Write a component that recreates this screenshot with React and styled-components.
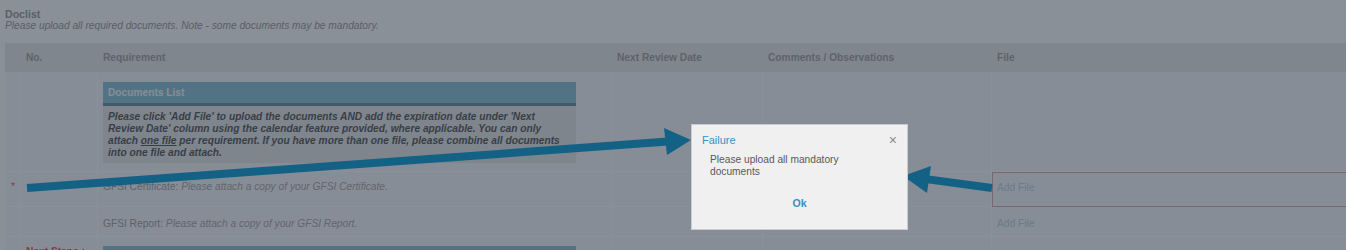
import React from "react";
import styled, { createGlobalStyle } from "styled-components";

const GlobalStyle = createGlobalStyle`
  html, body {
    margin: 0;
    padding: 0;
    background: #ffffff;
    font-family: "Liberation Sans", Arial, sans-serif;
    overflow: hidden;
  }
`;

const Page = styled.div`
  position: relative;
  width: 1346px;
  height: 250px;
  overflow: hidden;
  background: #fdfdfd;
  font-size: 10.2px;
`;

const Content = styled.div`
  padding: 8px 0 0 5px;
`;

const Title = styled.div`
  font-weight: 700;
  font-size: 10.6px;
  color: #9a9a9a;
  line-height: 12px;
`;

const Subtitle = styled.div`
  font-style: italic;
  color: #9a9a9a;
  line-height: 12px;
`;

const Table = styled.table`
  margin-top: 11px;
  width: 1380px;
  border-collapse: separate;
  border-spacing: 0;
  table-layout: fixed;
  font-size: 10.2px;
`;

const HeadCell = styled.th`
  background: #e9e9e9;
  color: #a2a2a2;
  font-weight: 700;
  text-align: left;
  height: 29px;
  padding: 0 5px;
`;

const Cell = styled.td`
  background: #f7f7f8;
  border-right: 1px solid #ffffff;
  border-bottom: 1px solid #ffffff;
  vertical-align: top;
  padding: ${(p) => (p.$pad ? p.$pad : "0 5px")};
  height: ${(p) => p.$h || "auto"};
  color: #b4b4b4;
  box-sizing: border-box;
  line-height: 12px;
`;

const FileCell = styled(Cell)`
  border: ${(p) => (p.$invalid ? "1px solid #dca6ad" : "none")};
  border-bottom: 1px solid ${(p) => (p.$invalid ? "#dca6ad" : "#ffffff")};
`;

const Asterisk = styled.span`
  color: #e35a66;
  padding-left: 6px;
`;

const Label = styled.span`
  color: #a0a0a0;
`;

const Hint = styled.span`
  font-style: italic;
  color: #a8a8a8;
`;

const InfoBox = styled.div`
  width: 473px;
`;

const InfoHeader = styled.div`
  background: #8cc2d5;
  color: #f4f8fa;
  font-weight: 700;
  height: 21px;
  line-height: 21px;
  padding: 0 5px;
  border-bottom: 3px solid #6f8fa0;
`;

const InfoBody = styled.div`
  background: #e6e6e6;
  color: #595959;
  font-weight: 700;
  font-style: italic;
  line-height: 12px;
  padding: 5px 5px 0;
  height: 57px;
  box-sizing: border-box;

  u {
    text-decoration: underline;
  }
`;

const NextSteps = styled.span`
  color: #e0535e;
  font-weight: 700;
  white-space: nowrap;
`;

const AddFile = styled.span`
  color: #b4d2e4;
`;

const Overlay = styled.div`
  position: absolute;
  inset: 0;
  background: rgba(23, 35, 51, 0.5);
`;

const Arrows = styled.svg`
  position: absolute;
  left: 0;
  top: 0;
  pointer-events: none;
`;

const Modal = styled.div`
  position: absolute;
  left: 691px;
  top: 124px;
  width: 217px;
  height: 106px;
  background: #f0f0f0;
  border: 1px solid #c9cdd2;
  box-sizing: border-box;
  padding: 8px 10px 0 10px;
`;

const ModalHead = styled.div`
  display: flex;
  justify-content: space-between;
  align-items: center;
  height: 14px;
`;

const ModalTitle = styled.span`
  color: #3a8fc0;
  font-size: 11px;
`;

const CloseBtn = styled.span`
  color: #8a8a8a;
  font-size: 14px;
  line-height: 14px;
`;

const ModalText = styled.div`
  color: #595959;
  font-size: 10.2px;
  line-height: 12px;
  margin: 7px 0 0 8px;
  width: 140px;
`;

const ModalFooter = styled.div`
  text-align: center;
  margin-top: 19px;
  line-height: 12px;
`;

const OkButton = styled.span`
  color: #3a8fc0;
  font-weight: 700;
  font-size: 10.6px;
`;

export default function App() {
  return (
    <>
      <GlobalStyle />
      <Page>
        <Content>
          <Title>Doclist</Title>
          <Subtitle>
            Please upload all required documents. Note - some documents may be
            mandatory.
          </Subtitle>
          <Table>
            <colgroup>
              <col style={{ width: 16 }} />
              <col style={{ width: 77 }} />
              <col style={{ width: 514 }} />
              <col style={{ width: 151 }} />
              <col style={{ width: 229 }} />
              <col />
            </colgroup>
            <thead>
              <tr>
                <HeadCell />
                <HeadCell>No.</HeadCell>
                <HeadCell>Requirement</HeadCell>
                <HeadCell>Next Review Date</HeadCell>
                <HeadCell>Comments / Observations</HeadCell>
                <HeadCell>File</HeadCell>
              </tr>
            </thead>
            <tbody>
              <tr>
                <Cell />
                <Cell />
                <Cell $pad="10px 5px 8px 5px">
                  <InfoBox>
                    <InfoHeader>Documents List</InfoHeader>
                    <InfoBody>
                      Please click 'Add File' to upload the documents AND add the
                      expiration date under 'Next Review Date' column using the
                      calendar feature provided, where applicable. You can only
                      attach <u>one file</u> per requirement. If you have more
                      than one file, please combine all documents into one file
                      and attach.
                    </InfoBody>
                  </InfoBox>
                </Cell>
                <Cell />
                <Cell />
                <FileCell />
              </tr>
              <tr>
                <Cell $pad="9px 0 0 0" $h="35px">
                  <Asterisk>*</Asterisk>
                </Cell>
                <Cell />
                <Cell $pad="9px 5px 0 5px">
                  <Label>GFSI Certificate:</Label>{" "}
                  <Hint>Please attach a copy of your GFSI Certificate.</Hint>
                </Cell>
                <Cell />
                <Cell />
                <FileCell $invalid $pad="9px 4px 0 4px">
                  <AddFile>Add File</AddFile>
                </FileCell>
              </tr>
              <tr>
                <Cell $h="30px" />
                <Cell />
                <Cell $pad="11px 5px 0 5px">
                  <Label>GFSI Report:</Label>{" "}
                  <Hint>Please attach a copy of your GFSI Report.</Hint>
                </Cell>
                <Cell />
                <Cell />
                <FileCell $pad="11px 5px 0 5px">
                  <AddFile>Add File</AddFile>
                </FileCell>
              </tr>
              <tr>
                <Cell />
                <Cell $pad="9px 5px 0 5px">
                  <NextSteps>Next Steps :</NextSteps>
                </Cell>
                <Cell $pad="9px 5px 0 5px">
                  <InfoBox>
                    <InfoHeader>Next Steps</InfoHeader>
                  </InfoBox>
                </Cell>
                <Cell />
                <Cell />
                <FileCell />
              </tr>
            </tbody>
          </Table>
        </Content>
        <Overlay />
        <Arrows width="1346" height="250" viewBox="0 0 1346 250">
          <line
            x1="27"
            y1="188"
            x2="668"
            y2="141.6"
            stroke="#136286"
            strokeWidth="8"
          />
          <polygon points="691,140 664,128 667,155" fill="#136286" />
          <line
            x1="992"
            y1="188"
            x2="928"
            y2="179.4"
            stroke="#136286"
            strokeWidth="8"
          />
          <polygon points="903,176 931,166 927,193" fill="#136286" />
        </Arrows>
        <Modal>
          <ModalHead>
            <ModalTitle>Failure</ModalTitle>
            <CloseBtn>×</CloseBtn>
          </ModalHead>
          <ModalText>Please upload all mandatory documents</ModalText>
          <ModalFooter>
            <OkButton>Ok</OkButton>
          </ModalFooter>
        </Modal>
      </Page>
    </>
  );
}
